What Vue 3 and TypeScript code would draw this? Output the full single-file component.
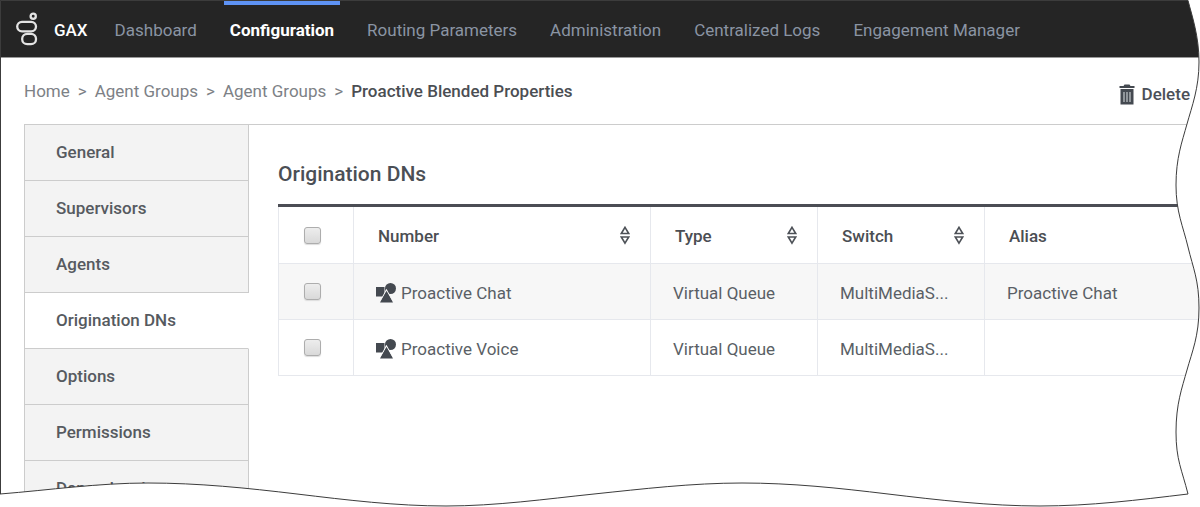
<script setup lang="ts">
import { ref } from 'vue'

interface Column {
  key: string
  label: string
  sortable: boolean
}

interface Row {
  number: string
  type: string
  switchName: string
  alias: string
}

const navItems: string[] = [
  'Dashboard',
  'Configuration',
  'Routing Parameters',
  'Administration',
  'Centralized Logs',
  'Engagement Manager',
]
const activeNav = ref('Configuration')

const crumbs: string[] = ['Home', 'Agent Groups', 'Agent Groups']

const tabs: string[] = [
  'General',
  'Supervisors',
  'Agents',
  'Origination DNs',
  'Options',
  'Permissions',
  'Dependencies',
]
const activeTab = ref('Origination DNs')

const columns: Column[] = [
  { key: 'number', label: 'Number', sortable: true },
  { key: 'type', label: 'Type', sortable: true },
  { key: 'switch', label: 'Switch', sortable: true },
  { key: 'alias', label: 'Alias', sortable: false },
]

const rows: Row[] = [
  { number: 'Proactive Chat', type: 'Virtual Queue', switchName: 'MultiMediaS...', alias: 'Proactive Chat' },
  { number: 'Proactive Voice', type: 'Virtual Queue', switchName: 'MultiMediaS...', alias: '' },
]
</script>

<template>
  <div class="page">
    <header class="topbar">
      <svg class="logo" width="22" height="35" viewBox="0 0 22 35" fill="none" stroke="#e4e4e4" stroke-width="2.3" aria-hidden="true">
        <circle cx="17.2" cy="5.2" r="2.6" />
        <rect x="1.2" y="10.8" width="18.800" height="9.600" rx="4.8" />
        <rect x="6.2" y="22.8" width="13.800" height="10.400" rx="5" />
      </svg>
      <a class="brand" href="#">GAX</a>
      <nav class="nav">
        <a
          v-for="item in navItems"
          :key="item"
          href="#"
          class="nav-link"
          :class="{ active: item === activeNav }"
          @click.prevent="activeNav = item"
        >{{ item }}</a>
      </nav>
    </header>

    <div class="subbar">
      <nav class="crumbs" aria-label="Breadcrumb">
        <template v-for="(crumb, i) in crumbs" :key="i">
          <a href="#">{{ crumb }}</a>
          <span class="sep">&gt;</span>
        </template>
        <strong>Proactive Blended Properties</strong>
      </nav>
      <button type="button" class="delete">
        <svg width="16" height="21" viewBox="0 0 16 21" aria-hidden="true">
          <path d="M0.5 2H4.5L5.5 0.5H10.5L11.500 2H15.500V4H0.500Z" fill="#444950" />
          <rect x="1.500" y="5" width="13" height="15.500" fill="#444950" />
          <path d="M5 8V18M8 8V18M11 8V18" stroke="#c4c8cc" stroke-width="1.2" />
        </svg>
        Delete
      </button>
    </div>

    <div class="panel">
      <nav class="tabs" aria-label="Sections">
        <button
          v-for="tab in tabs"
          :key="tab"
          type="button"
          class="tab"
          :class="{ active: tab === activeTab }"
          @click="activeTab = tab"
        >{{ tab }}</button>
      </nav>

      <main class="content">
        <h1>Origination DNs</h1>
        <table>
          <thead>
            <tr>
              <th class="check"><input type="checkbox" aria-label="Select all" /></th>
              <th v-for="col in columns" :key="col.key" :class="'col-' + col.key" scope="col">
                <div class="head">
                  <span>{{ col.label }}</span>
                  <button v-if="col.sortable" type="button" class="sort" :aria-label="'Sort by ' + col.label">
                    <svg width="10" height="20" viewBox="0 0 10 20" fill="none" stroke="#4d5157" stroke-width="1.6" aria-hidden="true">
                      <path d="M5 1.300L8.700 7.500H1.300Z" />
                      <path d="M5 17.200L8.700 11H1.300Z" />
                    </svg>
                  </button>
                </div>
              </th>
            </tr>
          </thead>
          <tbody>
            <tr v-for="row in rows" :key="row.number">
              <td class="check"><input type="checkbox" :aria-label="'Select ' + row.number" /></td>
              <td>
                <div class="name">
                  <svg width="20" height="20" viewBox="0 0 20 20" aria-hidden="true">
                    <rect x="0" y="4" width="8.500" height="9.500" fill="#444950" />
                    <circle cx="14.500" cy="5.500" r="5.500" fill="#444950" />
                    <path class="cone" d="M10.500 7L17.300 19.500H3.700Z" fill="#444950" stroke-width="1.2" />
                    <path d="M10.500 8L17 19.500H4Z" fill="#444950" />
                  </svg>
                  <span>{{ row.number }}</span>
                </div>
              </td>
              <td>{{ row.type }}</td>
              <td>{{ row.switchName }}</td>
              <td>{{ row.alias }}</td>
            </tr>
          </tbody>
        </table>
      </main>
    </div>

    <svg class="torn" viewBox="0 0 1200 507" preserveAspectRatio="none" aria-hidden="true">
      <path
        fill="#fff"
        d="M1188 0C1192 16 1199 36 1199 62S1192 106 1187 124S1176 158 1176 185S1183 226 1188 247S1199 280 1199 308S1192 352 1187 370S1176 404 1176 432S1182 470 1188 494C1138 500 1090 506 1040 506S938 500 888 494S792 483 742 483S642 489 594 494S496 506 446 506S347 500 297 494S198 483 148 483S50 490 0 494V507H1200V0Z"
      />
      <path
        fill="none"
        stroke="#3c3c3c"
        d="M0.500 494V0.500H1188C1192 16 1199 36 1199 62S1192 106 1187 124S1176 158 1176 185S1183 226 1188 247S1199 280 1199 308S1192 352 1187 370S1176 404 1176 432S1182 470 1188 494C1138 500 1090 506 1040 506S938 500 888 494S792 483 742 483S642 489 594 494S496 506 446 506S347 500 297 494S198 483 148 483S50 490 0 494"
      />
    </svg>
  </div>
</template>

<style>
body {
  margin: 0;
}
</style>

<style scoped>
.page {
  position: relative;
  display: flex;
  flex-direction: column;
  height: 100vh;
  overflow: hidden;
  background: #fff;
  color: #5a5f66;
  font-family: Roboto, 'Liberation Sans', sans-serif;
  font-size: 17px;
  line-height: 24px;
}

a {
  color: inherit;
  text-decoration: none;
}

button {
  margin: 0;
  padding: 0;
  border: 0;
  background: none;
  color: inherit;
  font: inherit;
  cursor: pointer;
}

.topbar {
  display: flex;
  align-items: center;
  flex: none;
  height: 57px;
  padding-left: 16px;
  background: #252525;
  border-bottom: 1px solid #999;
}

.logo {
  flex: none;
}

.brand {
  margin: 3px 27px 0 16px;
  color: #fff;
  font-weight: 500;
}

.nav {
  display: flex;
  align-self: stretch;
  gap: 33px;
}

.nav-link {
  display: flex;
  align-items: center;
  padding-top: 3px;
  color: #8a94a3;
  white-space: nowrap;
}

.nav-link.active {
  margin: 0 -6px;
  padding: 0 6px 2px;
  border-top: 5px solid #5e93f5;
  color: #fff;
  font-weight: 700;
}

.subbar {
  display: flex;
  align-items: center;
  justify-content: space-between;
  flex: none;
  height: 66px;
  padding: 0 10px 0 24px;
}

.crumbs {
  display: flex;
  gap: 8px;
  color: #7d8186;
  white-space: nowrap;
}

.crumbs strong {
  color: #4b4e53;
  font-weight: 500;
}

.delete {
  display: flex;
  align-items: center;
  gap: 7px;
  padding-top: 6px;
  color: #4b5058;
  font-weight: 500;
}

.panel {
  display: flex;
  flex: 1;
  margin-left: 24px;
  border-top: 1px solid #ccc;
}

.tabs {
  display: flex;
  flex-direction: column;
  flex: none;
  width: 225px;
}

.tab {
  flex: none;
  box-sizing: border-box;
  height: 56px;
  padding: 0 0 2px 31px;
  border: 1px solid #ccc;
  border-top: 0;
  background: #f3f3f3;
  color: #565a60;
  font-weight: 500;
  text-align: left;
}

.tab.active {
  border-right-color: transparent;
  background: #fff;
}

.content {
  flex: 1;
  min-width: 0;
  padding: 35px 0 0 29px;
}

h1 {
  margin: 0 0 16px;
  color: #4b4f55;
  font-size: 21px;
  font-weight: 500;
  line-height: 28px;
}

table {
  width: 100%;
  table-layout: fixed;
  border-collapse: collapse;
  border-top: 3px solid #4b4d54;
}

th,
td {
  box-sizing: border-box;
  height: 56px;
  padding: 2px 0 0 22px;
  border: 1px solid #e6e8ed;
  text-align: left;
  white-space: nowrap;
}

th {
  height: 58px;
  padding: 2px 20px 0 24px;
  border-top: 3px solid #4b4d54;
  color: #4b4e53;
  font-weight: 500;
}

.check {
  width: 75px;
  padding: 0 8px 0 0;
}

.col-type,
.col-switch {
  width: 167px;
}

.col-alias {
  width: 215px;
}

tbody tr:nth-child(odd) {
  background: #f7f7f7;
}

input[type='checkbox'] {
  display: block;
  appearance: none;
  box-sizing: border-box;
  width: 17px;
  height: 17px;
  margin: 0 auto;
  border: 1px solid #adadad;
  border-radius: 3px;
  background: linear-gradient(#ededed, #d9d9d9);
  box-shadow: 0 1px 1px #ddd;
}

input[type='checkbox']:checked {
  background: #5e93f5;
}

.head {
  display: flex;
  align-items: center;
  justify-content: space-between;
}

.sort {
  display: flex;
}

.name {
  display: flex;
  align-items: center;
  gap: 5px;
}

.cone {
  stroke: #f7f7f7;
}

tbody tr:nth-child(even) .cone {
  stroke: #fff;
}

.torn {
  position: absolute;
  inset: 0;
  width: 100%;
  height: 100%;
  pointer-events: none;
}
</style>
